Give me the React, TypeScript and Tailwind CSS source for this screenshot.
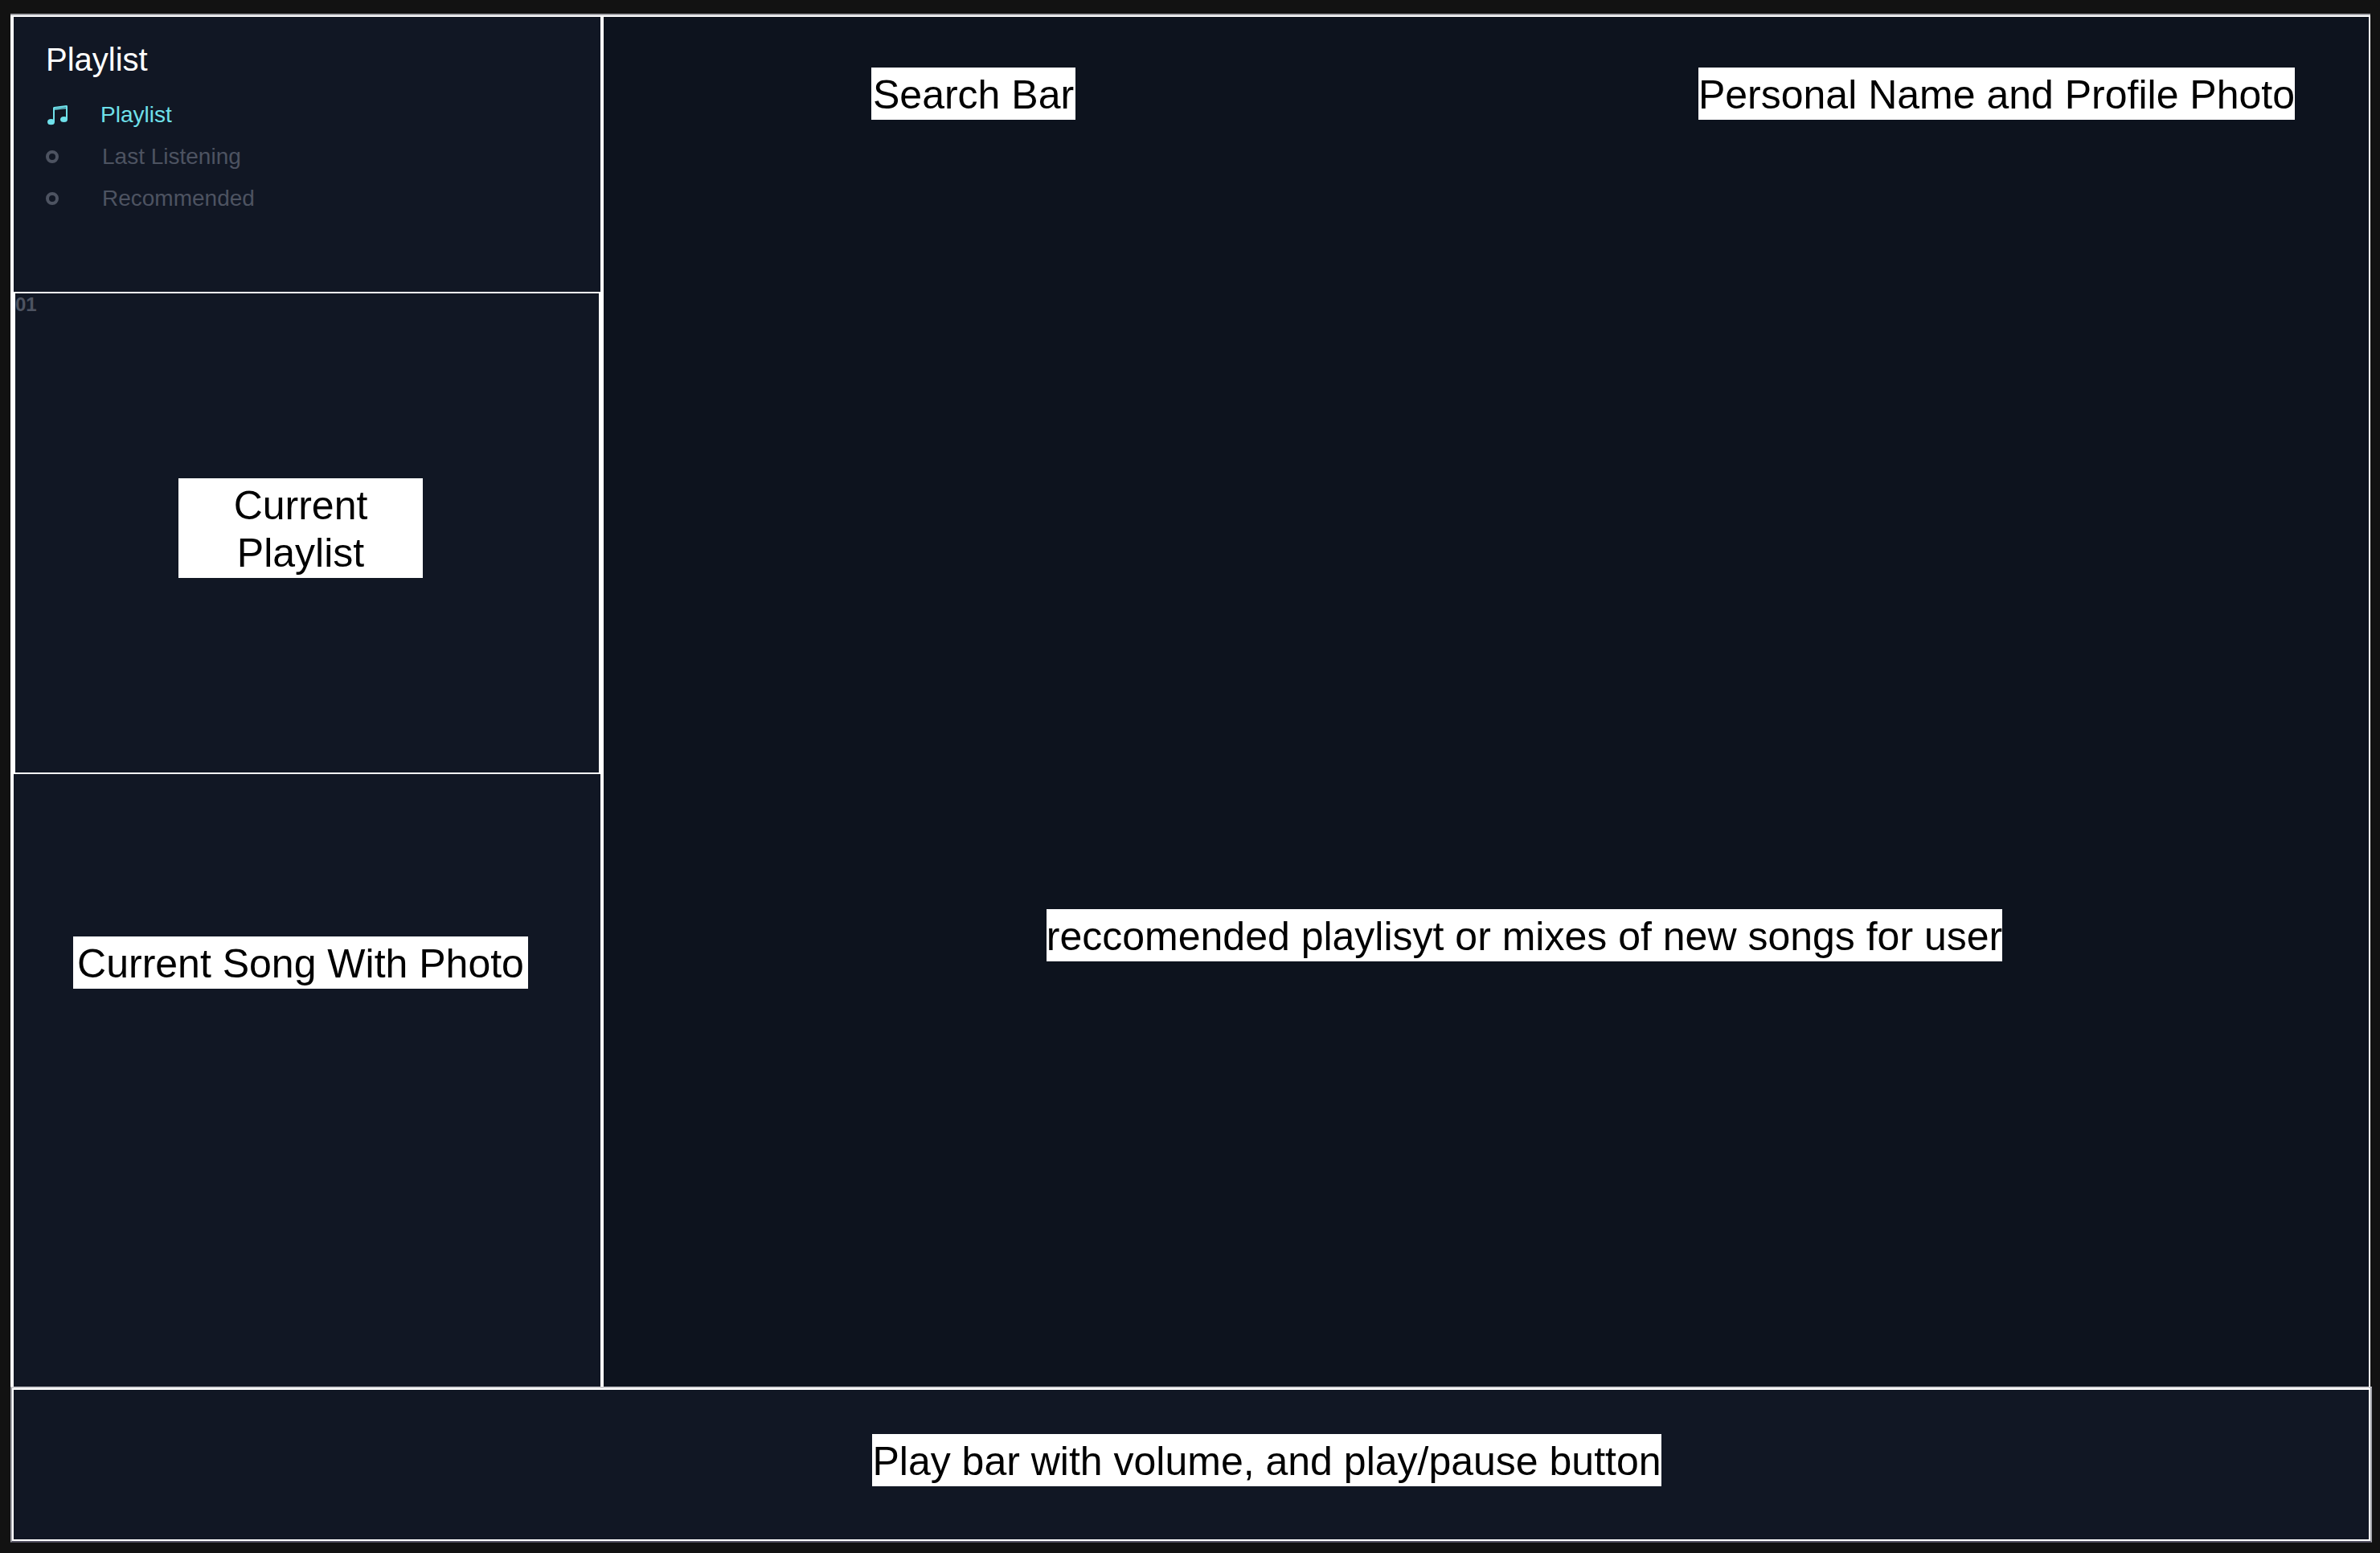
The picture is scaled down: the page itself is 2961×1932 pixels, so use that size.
import type { ReactNode } from "react";

function Label({ children, className = "" }: { children: ReactNode; className?: string }) {
  return (
    <p className={`bg-white pt-[5px] pb-px text-center text-[50px] leading-[59px] text-black ${className}`}>
      {children}
    </p>
  );
}

function NoteIcon() {
  return (
    <svg viewBox="0 0 26 25" className="h-[25px] w-[26px] text-[#6fe0ea]" fill="currentColor" aria-hidden="true">
      <path
        fillRule="evenodd"
        d="M7 3.2Q7 2 8.300 1.900L23.500 0.100Q25 0 25 1.500V17.500H23V4.300L9 5.700V21H7ZM9 3.900V4.300L23 2.900V2.500Z"
      />
      <ellipse cx="4.500" cy="20.700" rx="4.500" ry="3.600" />
      <ellipse cx="20.500" cy="17.500" rx="4.500" ry="3.600" />
    </svg>
  );
}

function CircleIcon() {
  return <span className="block size-4 rounded-full border-4 border-[#4d5361]" />;
}

const links = [
  { text: "Playlist", active: true },
  { text: "Last Listening", active: false },
  { text: "Recommended", active: false },
];

export default function App() {
  return (
    <div className="flex min-h-screen flex-col bg-[#121212] pt-[17px] pr-2.5 pb-[13px] pl-[13px] font-['Liberation_Sans',Arial,sans-serif]">
      <div className="mr-0.5 flex flex-1 border-t-2 border-[#a3a4aa]">
        <aside className="flex w-1/4 shrink-0 flex-col border-t-2 border-l-4 border-white bg-[#111724]">
          <section className="h-[342px] pt-[29px] pl-10">
            <h1 className="text-[40px] leading-[48px] text-white">Playlist</h1>
            <nav className="mt-[19px]">
              <ul>
                {links.map((link) => (
                  <li key={link.text}>
                    <a
                      href="#"
                      className={
                        link.active
                          ? "flex h-[52px] items-center gap-10 pl-0.5 text-[28px] text-[#6fe0ea]"
                          : "flex h-[52px] items-center gap-[54px] text-[28px] text-[#4d5361]"
                      }
                    >
                      {link.active ? <NoteIcon /> : <CircleIcon />}
                      {link.text}
                    </a>
                  </li>
                ))}
              </ul>
            </nav>
          </section>
          <section className="flex h-[600px] flex-col border-2 border-white">
            <p className="h-7 text-2xl leading-7 font-bold text-[#4d5361]">01</p>
            <div className="flex justify-center pt-[202px] pr-4">
              <Label className="w-[304px] px-10">Current Playlist</Label>
            </div>
          </section>
          <section className="flex flex-1 items-start justify-center pt-[202px] pr-4">
            <Label className="px-[5px]">Current Song With Photo</Label>
          </section>
        </aside>
        <main className="flex-1 border-t-2 border-r-2 border-l-4 border-white bg-[#0d131e]">
          <header className="flex justify-between pt-[63px] pr-[92px] pl-[333px]">
            <Label className="px-0.5">Search Bar</Label>
            <Label>Personal Name and Profile Photo</Label>
          </header>
          <section className="flex justify-center pt-[982px] pl-[95px]">
            <Label>reccomended playlisyt or mixes of new songs for user</Label>
          </section>
        </main>
      </div>
      <footer className="border-2 border-t-[#d0d0d4] border-r-[#a3a4aa] border-b-[#565464] border-l-[#a3a4aa]">
        <div className="flex h-[190px] items-start justify-center border-2 border-white bg-[#111724] pt-[55px] pl-[188px]">
          <Label>Play bar with volume, and play/pause button</Label>
        </div>
      </footer>
    </div>
  );
}
